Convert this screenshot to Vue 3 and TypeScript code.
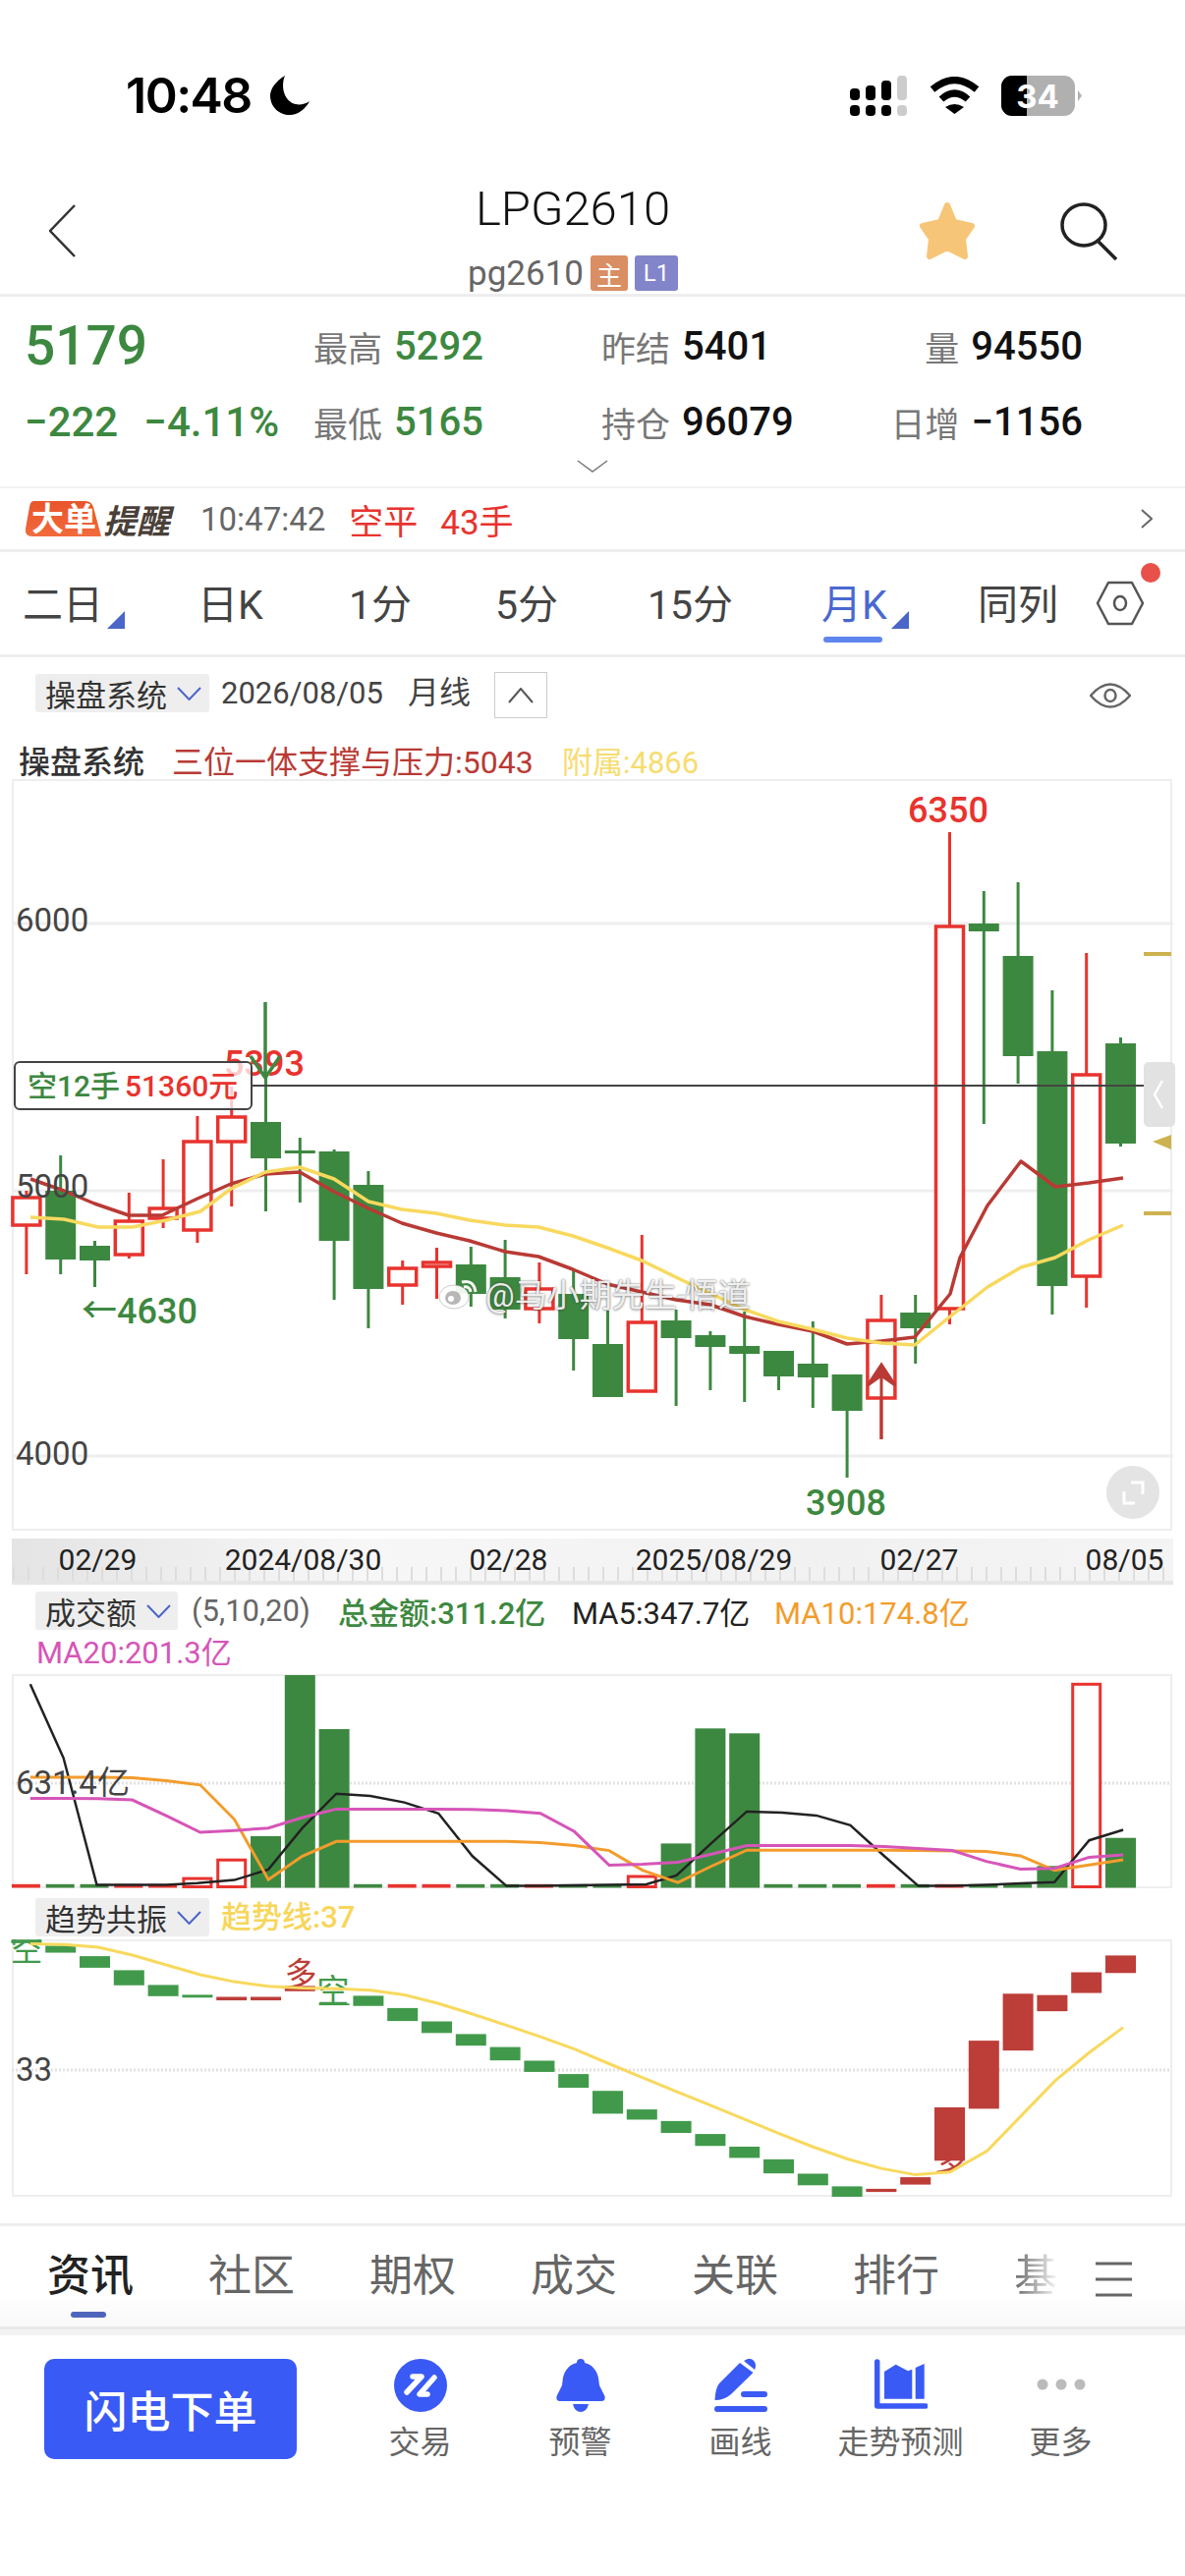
<script setup lang="ts">
type Row = [string, number, number, number, number]
const raw: Row[] = [
  ['r', 1212, 1219, 1247, 1297], ['g', 1176, 1212, 1282, 1297], ['g', 1263, 1268, 1283, 1310],
  ['r', 1214, 1243, 1277, 1281], ['r', 1180, 1230, 1240, 1250], ['r', 1136, 1162, 1252, 1265],
  ['r', 1106, 1137, 1162, 1228], ['g', 1097, 1142, 1179, 1233], ['g', 1158, 1171, 1174, 1224],
  ['g', 1170, 1172, 1263, 1323], ['g', 1192, 1206, 1312, 1352], ['r', 1283, 1291, 1308, 1328],
  ['r', 1270, 1285, 1289, 1322], ['g', 1269, 1287, 1317, 1330], ['g', 1262, 1300, 1333, 1342],
  ['r', 1285, 1312, 1332, 1347], ['g', 1292, 1317, 1363, 1395], ['g', 1334, 1368, 1422, 1422],
  ['r', 1257, 1346, 1416, 1416], ['g', 1333, 1344, 1362, 1431], ['g', 1355, 1359, 1371, 1415],
  ['g', 1335, 1370, 1378, 1427], ['g', 1375, 1375, 1401, 1415], ['g', 1345, 1388, 1402, 1433],
  ['g', 1399, 1399, 1436, 1504], ['r', 1318, 1344, 1423, 1465], ['g', 1318, 1336, 1352, 1388],
  ['r', 847, 943, 1332, 1348], ['g', 907, 940, 948, 1144], ['g', 898, 973, 1075, 1103],
  ['g', 1008, 1070, 1309, 1338], ['r', 970, 1094, 1299, 1331], ['g', 1056, 1062, 1164, 1167]
]
const cx = (i: number): number => 26.9 + 34.8 * i
const candles = raw.map((r, i) => ({ red: r[0] === 'r', x: cx(i), high: r[1], top: r[2], bottom: r[3], low: r[4] }))

const pts = (a: number[][]): string => a.map(p => p.join(',')).join(' ')
const maRed = pts([[31,1200],[65,1212],[96,1225],[131,1237],[165,1237],[201,1220],[235,1205],[270,1195],[305,1193],[340,1213],[375,1230],[409,1245],[444,1255],[478,1263],[514,1274],[548,1279],[583,1292],[618,1307],[653,1315],[688,1323],[723,1328],[758,1340],[792,1348],[827,1355],[862,1368],[897,1365],[931,1361],[967,1317],[977,1280],[1005,1227],[1039,1182],[1074,1208],[1108,1204],[1143,1199]])
const maYellow = pts([[31,1239],[65,1241],[100,1249],[135,1249],[169,1242],[204,1233],[235,1210],[270,1193],[305,1188],[340,1200],[375,1223],[409,1231],[444,1235],[478,1242],[514,1247],[548,1249],[583,1258],[618,1270],[653,1283],[692,1302],[758,1333],[792,1345],[827,1353],[862,1362],[897,1367],[931,1369],[967,1340],[1005,1310],[1039,1290],[1074,1280],[1108,1262],[1143,1247]])

const py = (y: number): number => +(1700 + y / 2.8).toFixed(1)
const vp = (a: number[][]): string => pts(a.map(p => [+(p[0] / 1.3).toFixed(1), py(p[1])]))
const volBlack = vp([[40,40],[84,250],[128,612],[175,612],[220,612],[261,607],[310,598],[355,568],[400,450],[445,352],[490,358],[535,377],[580,408],[625,530],[670,615],[715,615],[760,613],[804,612],[855,610],[895,585],[940,495],[988,403],[1035,406],[1080,414],[1125,442],[1170,530],[1215,615],[1260,615],[1305,612],[1350,608],[1395,604],[1441,485],[1486,455]])
const volOrange = vp([[40,305],[84,305],[130,305],[175,307],[220,315],[265,327],[310,425],[355,597],[400,530],[445,488],[490,488],[535,488],[580,488],[625,488],[670,488],[715,491],[760,500],[806,514],[850,570],[897,605],[940,560],[988,513],[1035,513],[1080,513],[1125,513],[1170,513],[1215,514],[1260,515],[1305,517],[1350,529],[1395,570],[1441,555],[1486,540]])
const volPink = vp([[40,365],[84,365],[130,366],[175,370],[220,415],[265,462],[310,457],[355,450],[400,420],[445,396],[490,396],[535,396],[580,396],[625,397],[670,400],[715,408],[760,460],[806,556],[850,553],[897,547],[940,525],[988,500],[1035,500],[1080,500],[1125,500],[1170,503],[1215,508],[1260,514],[1305,545],[1350,567],[1395,565],[1441,533],[1486,526]])
const trendLine = vp([[40,780],[85,782],[130,790],[175,812],[220,840],[265,868],[310,888],[355,901],[400,906],[445,908],[490,912],[535,925],[580,950],[625,980],[670,1012],[715,1045],[760,1080],[804,1120],[849,1160],[894,1200],[940,1240],[985,1280],[1030,1320],[1075,1358],[1121,1393],[1166,1420],[1211,1438],[1257,1430],[1306,1370],[1351,1270],[1396,1170],[1441,1090],[1486,1018]])

const volTops: (number | null)[] = [null,null,null,null,null,594,541,473,14,168,null,null,null,null,null,null,null,null,588,494,166,180,null,null,null,null,null,null,null,null,558,40,478]
const volReds = new Set([0,3,4,5,6,11,12,15,18,25,27,31])
const vols = volTops.map((t, i) => ({
  x: cx(i), red: volReds.has(i), dash: t === null, top: t === null ? 1917.800 : py(t)
}))

const trendRaw: [string, number, number][] = [
  ['g',768,778],['g',785,805],['g',815,848],['g',855,898],['g',897,929],['g',925,933],['r',931,941],['r',931,941],['r',900,915],['g',950,955],
  ['g',928,957],['g',963,1000],['g',1001,1034],['g',1037,1070],['g',1074,1112],['g',1113,1145],['g',1151,1190],['g',1199,1264],['g',1252,1281],['g',1285,1319],
  ['g',1322,1356],['g',1358,1390],['g',1394,1434],['g',1435,1468],['g',1471,1502],['r',1478,1487],['r',1445,1466],['r',1246,1398],['r',1056,1250],['r',922,1084],
  ['r',926,972],['r',861,920],['r',813,863]
]
const trends = trendRaw.map((r, i) => ({ x: cx(i), red: r[0] === 'r', y: py(r[1]), h: (r[2] - r[1]) / 2.8 }))

const periodTabs = [
  { t: '二日', tri: true }, { t: '日K' }, { t: '1分' }, { t: '5分' }, { t: '15分' },
  { t: '月K', tri: true, on: true }, { t: '同列' }
]
const axisDates = ['02/29', '2024/08/30', '02/28', '2025/08/29', '02/27', '08/05']
const infoTabs = ['资讯', '社区', '期权', '成交', '关联', '排行']
</script>

<template>
  <div class="page">
    <header class="status">
      <span class="time">10:48</span>
      <svg class="moon" width="40" height="40" viewBox="0 0 40 40"><path d="M15 0C5 6 0 14 0 20c0 12 9 20 20 20 8 0 16-6 20-14-4 3-10 4-14 3C15 27 10 12 15 0Z" /></svg>
      <svg class="signal" width="58" height="41" viewBox="0 0 58 41">
        <rect x="0" y="13" width="10" height="12" rx="4" /><rect x="16" y="10" width="10" height="15" rx="4" /><rect x="32" y="5" width="10" height="20" rx="4" /><rect class="dim" x="48" y="0" width="10" height="25" rx="4" />
        <rect x="0" y="30" width="10" height="11" rx="4" /><rect x="16" y="30" width="10" height="11" rx="4" /><rect x="32" y="30" width="10" height="11" rx="4" /><rect class="dim" x="48" y="30" width="10" height="11" rx="4" />
      </svg>
      <svg class="wifi" width="51" height="38" viewBox="0 0 51 38">
        <path d="M3 13Q25.500-6 48 13" fill="none" stroke="#000" stroke-width="7" />
        <path d="M12 23Q25.500 11 39 23" fill="none" stroke="#000" stroke-width="7" />
        <path d="M25.500 38L16 31Q25.500 25 35 31Z" />
      </svg>
      <svg class="battery" width="82" height="41" viewBox="0 0 82 41">
        <rect x="0" y="0" width="75" height="41" rx="11" fill="#b0b0b0" />
        <path d="M11 0H26V41H11A11 11 0 0 1 0 30V11A11 11 0 0 1 11 0Z" fill="#000" />
        <path d="M78 15L82 20.500L78 26Z" fill="#b0b0b0" />
        <text x="37" y="33" class="batt-text" text-anchor="middle">34</text>
      </svg>
    </header>

    <nav class="nav">
      <svg class="back" width="27" height="54" viewBox="0 0 27 54"><path d="M26 1L1 27L26 53" fill="none" stroke="#333" stroke-width="2.500" /></svg>
      <div class="nav-center">
        <div class="title">LPG2610</div>
        <div class="sub"><span class="code">pg2610</span><span class="badge b-main">主</span><span class="badge b-l1">L1</span></div>
      </div>
      <svg class="star" width="58" height="60" viewBox="0 0 58 60"><polygon points="29,4 36,21 54,25 45,38 47,56 29,47 11,56 13,38 4,25 22,21" fill="#f6c577" stroke="#f6c577" stroke-width="6" stroke-linejoin="round" /></svg>
      <svg class="search" width="60" height="60" viewBox="0 0 60 60"><ellipse cx="24" cy="23" rx="22" ry="21" fill="none" stroke="#222" stroke-width="3.500" /><path d="M39 40L57 58" stroke="#222" stroke-width="3.500" /></svg>
    </nav>

    <section class="quote">
      <div class="last">5179</div>
      <div class="cell"><span class="lab">最高</span><span class="val green">5292</span></div>
      <div class="cell"><span class="lab">昨结</span><span class="val">5401</span></div>
      <div class="cell end"><span class="lab">量</span><span class="val">94550</span></div>
      <div class="chg green"><span>−222</span><span>−4.11%</span></div>
      <div class="cell"><span class="lab">最低</span><span class="val green">5165</span></div>
      <div class="cell"><span class="lab">持仓</span><span class="val">96079</span></div>
      <div class="cell end"><span class="lab">日增</span><span class="val">−1156</span></div>
      <svg class="more" width="32" height="13" viewBox="0 0 32 13"><path d="M1 1L16 12L31 1" fill="none" stroke="#777" stroke-width="1.500" /></svg>
    </section>

    <section class="alert">
      <svg class="big" width="78" height="36" viewBox="0 0 78 36">
        <defs><linearGradient id="bigG" x1="0" y1="0" x2="0" y2="1"><stop offset="0" stop-color="#e8552a" /><stop offset="1" stop-color="#f26a3c" /></linearGradient></defs>
        <path d="M9 0H62Q68 0 70 6L78 36H8Q0 36 1 28L5 6Q6 0 9 0Z" fill="url(#bigG)" />
        <text x="7" y="30" class="big-text">大单</text>
      </svg>
      <span class="remind">提醒</span>
      <span class="a-time">10:47:42</span>
      <span class="a-red a-first">空平</span>
      <span class="a-red a-second">43手</span>
      <svg class="a-go" width="12" height="20" viewBox="0 0 12 20"><path d="M1 1L11 10L1 19" fill="none" stroke="#666" stroke-width="2" /></svg>
    </section>

    <section class="periods">
      <div v-for="p in periodTabs" :key="p.t" class="period" :class="{ on: p.on }">
        <span>{{ p.t }}</span>
        <svg v-if="p.tri" class="tri" width="18" height="18" viewBox="0 0 18 18"><path d="M18 0V18H0Z" fill="#4a66c8" /></svg>
        <i v-if="p.on" class="period-bar"></i>
      </div>
      <div class="hex">
        <svg width="50" height="46" viewBox="0 0 50 46"><path d="M13 2H37L48 23L37 44H13L2 23Z" fill="none" stroke="#555" stroke-width="2.500" stroke-linejoin="round" /><ellipse cx="25" cy="23" rx="6" ry="7" fill="none" stroke="#555" stroke-width="2.500" /></svg>
        <i class="red-dot"></i>
      </div>
    </section>

    <section class="toolbar">
      <div class="drop w177"><span>操盘系统</span><svg width="25" height="14" viewBox="0 0 25 14"><path d="M1 1L12.500 13L24 1" fill="none" stroke="#4a66c8" stroke-width="2" /></svg></div>
      <span class="tool-date">2026/08/05</span>
      <span class="tool-line">月线</span>
      <div class="collapse"><svg width="26" height="16" viewBox="0 0 26 16"><path d="M1 15L13 1L25 15" fill="none" stroke="#555" stroke-width="2" /></svg></div>
      <svg class="eye" width="42" height="30" viewBox="0 0 42 30"><path d="M1 15Q21-8 41 15Q21 38 1 15Z" fill="none" stroke="#666" stroke-width="2.500" /><ellipse cx="21" cy="15" rx="5.500" ry="6" fill="none" stroke="#666" stroke-width="2.500" /></svg>
    </section>

    <section class="legend">
      <span class="leg-name">操盘系统</span>
      <span class="leg-red">三位一体支撑与压力:5043</span>
      <span class="leg-yellow">附属:4866</span>
    </section>

    <div class="chart-wrap">
      <svg class="chart" width="1206" height="765" viewBox="0 793 1206 765">
        <rect x="13" y="794" width="1179" height="763" fill="none" stroke="#eee" stroke-width="2" />
        <g stroke="#eee" stroke-width="3">
          <line x1="12" y1="940" x2="1194" y2="940" /><line x1="12" y1="1212" x2="1194" y2="1212" /><line x1="12" y1="1482" x2="1194" y2="1482" />
        </g>
        <g v-for="(c, i) in candles" :key="i">
          <line :x1="c.x" :y1="c.high" :x2="c.x" :y2="c.low" :stroke="c.red ? '#e8332e' : '#3d8840'" stroke-width="3" />
          <rect v-if="c.red" :x="c.x - 14" :y="c.top" width="28" :height="c.bottom - c.top" fill="#fff" stroke="#e8332e" stroke-width="3.500" />
          <rect v-else :x="c.x - 15.500" :y="c.top" width="31" :height="c.bottom - c.top" fill="#3d8840" />
        </g>
        <polyline :points="maRed" fill="none" stroke="#b93a35" stroke-width="3.500" stroke-linejoin="round" />
        <polyline :points="maYellow" fill="none" stroke="#f8d95e" stroke-width="3.500" stroke-linejoin="round" />
        <text x="16" y="948" class="ax">6000</text>
        <text x="16" y="1219" class="ax">5000</text>
        <text x="16" y="1491" class="ax">4000</text>
        <text x="965" y="837" class="hi red-t" text-anchor="middle">6350</text>
        <text x="269" y="1095" class="hi red-t" text-anchor="middle">5393</text>
        <text x="861" y="1542" class="hi green-t" text-anchor="middle">3908</text>
        <text x="83" y="1347" class="hi green-t">←4630</text>
        <line x1="256" y1="1105" x2="1194" y2="1105" stroke="#444" stroke-width="2" />
        <rect x="15" y="1081" width="241" height="48" rx="5" fill="#fff" fill-opacity=".75" stroke="#444" stroke-width="2" />
        <text x="28" y="1116" class="pos green-t">空12手</text>
        <text x="127" y="1116" class="pos red-t">51360元</text>
        <path d="M270 1020V1097M255 1075L270 1097L285 1075" fill="none" stroke="#3d8840" stroke-width="3.500" />
        <path d="M897 1465V1400M897 1389L883 1410L897 1400L911 1410Z" fill="#b93a35" stroke="#b93a35" stroke-width="3" />
        <rect x="1164" y="969" width="28" height="4" fill="#cdb24f" />
        <rect x="1164" y="1233" width="28" height="4" fill="#cdb24f" />
        <path d="M1173 1162L1192 1155V1170Z" fill="#cdb24f" />
        <rect x="1164" y="1081" width="32" height="66" rx="5" fill="#e2e2e2" />
        <path d="M1183 1100L1175 1114L1183 1128" fill="none" stroke="#fff" stroke-width="2.500" />
        <ellipse cx="1153" cy="1519" rx="27" ry="27" fill="#e4e4e4" />
        <path d="M1151 1509H1163V1521M1144 1518V1530H1155" fill="none" stroke="#fff" stroke-width="3" />
      </svg>
      <div class="mark">
        <svg width="42" height="34" viewBox="0 0 42 34">
          <ellipse cx="16" cy="21" rx="15" ry="12" fill="#fff" fill-opacity=".92" stroke="#999" stroke-opacity=".5" />
          <ellipse cx="15" cy="22" rx="8" ry="7" fill="#aaa" fill-opacity=".85" />
          <circle cx="13" cy="23" r="3" fill="#fff" />
          <path d="M24 6Q36 3 38 16M26 11Q32 10 33 16" fill="none" stroke="#fff" stroke-opacity=".95" stroke-width="3" />
        </svg>
        <span>@马小期先生-悟道</span>
      </div>
    </div>

    <div class="axis">
      <div class="axis-labels"><span v-for="d in axisDates" :key="d">{{ d }}</span></div>
    </div>

    <section class="vol-head">
      <div class="vol-row">
        <div class="drop w145"><span>成交额</span><svg width="25" height="14" viewBox="0 0 25 14"><path d="M1 1L12.500 13L24 1" fill="none" stroke="#4a66c8" stroke-width="2" /></svg></div>
        <span class="v-param">(5,10,20)</span>
        <span class="v-green">总金额:311.2亿</span>
        <span class="v-dark">MA5:347.7亿</span>
        <span class="v-orange">MA10:174.8亿</span>
      </div>
      <div class="v-pink">MA20:201.3亿</div>
    </section>

    <svg class="chart" width="1206" height="218" viewBox="0 1704 1206 218">
      <rect x="13" y="1705" width="1179" height="216" fill="none" stroke="#eee" stroke-width="2" />
      <line x1="12" y1="1815" x2="1192" y2="1815" stroke="#e2e2e2" stroke-width="3" stroke-dasharray="2 2" />
      <template v-for="(v, i) in vols" :key="i">
        <rect v-if="v.dash" :x="v.x - 15" y="1917.800" width="29" height="3.700" :fill="v.red ? '#e8332e' : '#3d8840'" />
        <rect v-else-if="v.red" :x="v.x - 14" :y="v.top" width="28" :height="1920.500 - v.top" fill="#fff" stroke="#e8332e" stroke-width="3" />
        <rect v-else :x="v.x - 15.500" :y="v.top" width="31" :height="1921.500 - v.top" fill="#3d8840" />
      </template>
      <polyline :points="volBlack" fill="none" stroke="#222" stroke-width="2.500" />
      <polyline :points="volOrange" fill="none" stroke="#f39c2d" stroke-width="3" />
      <polyline :points="volPink" fill="none" stroke="#d655b8" stroke-width="3" />
      <text x="16" y="1826" class="ax">631.4亿</text>
    </svg>

    <section class="trend-head">
      <div class="drop w177"><span>趋势共振</span><svg width="25" height="14" viewBox="0 0 25 14"><path d="M1 1L12.500 13L24 1" fill="none" stroke="#4a66c8" stroke-width="2" /></svg></div>
      <span class="t-yellow">趋势线:37</span>
    </section>

    <svg class="chart" width="1206" height="262" viewBox="0 1974 1206 262">
      <rect x="13" y="1975" width="1179" height="260" fill="none" stroke="#eee" stroke-width="2" />
      <line x1="12" y1="2107" x2="1192" y2="2107" stroke="#e2e2e2" stroke-width="3" stroke-dasharray="2 2" />
      <text x="967" y="2209" class="sig red-d" text-anchor="middle">多</text>
      <rect v-for="(t, i) in trends" :key="i" :x="t.x - 15.500" :y="t.y" width="31" :height="t.h" :fill="t.red ? '#bd3d38' : '#419a4b'" />
      <text x="27" y="1996" class="sig green-l" text-anchor="middle">空</text>
      <text x="306" y="2021" class="sig red-d" text-anchor="middle">多</text>
      <text x="339" y="2038" class="sig green-l" text-anchor="middle">空</text>
      <polyline :points="trendLine" fill="none" stroke="#f8d95e" stroke-width="3" />
      <text x="16" y="2118" class="ax">33</text>
    </svg>

    <div class="gap"></div>

    <section class="info">
      <div class="info-tabs">
        <div v-for="(t, i) in infoTabs" :key="t" class="info-tab" :class="{ on: i === 0 }">{{ t }}<i v-if="i === 0" class="info-bar"></i></div>
        <div class="info-tab fade">基</div>
      </div>
      <svg class="menu" width="37" height="36" viewBox="0 0 37 36"><path d="M0 2H37M0 18H37M0 34H37" stroke="#666" stroke-width="3" /></svg>
    </section>

    <footer class="bottom">
      <button class="flash">闪电下单</button>
      <div class="act">
        <svg width="54" height="54" viewBox="0 0 54 54"><circle cx="27" cy="27" r="27" fill="#3a5af5" /><path d="M13 34L28 18H19M41 19L26 36H34" fill="none" stroke="#fff" stroke-width="5.500" stroke-linecap="round" stroke-linejoin="round" /></svg>
        <span>交易</span>
      </div>
      <div class="act">
        <svg width="54" height="54" viewBox="0 0 54 54"><path d="M27 0a4 4 0 0 1 4 4C40 6 45 14 45.500 23L46 27L51.500 38Q52.500 43 48 43H6Q1.500 43 2.500 38L8 27L8.500 23C9 14 14 6 23 4a4 4 0 0 1 4-4Z" fill="#3a5af5" /><path d="M19 46H35Q33 54 27 54Q21 54 19 46Z" fill="#3a5af5" /></svg>
        <span>预警</span>
      </div>
      <div class="act">
        <svg width="54" height="54" viewBox="0 0 54 54"><path d="M.5 42Q1 30 5 25L26 4L39.500 14L17 36Q10 42 .5 42Z" fill="#3a5af5" /><path d="M30 2L34 0Q38-1 41 3Q43 7 41 11Z" fill="#3a5af5" /><rect x="27" y="33" width="27" height="6" rx="3" fill="#3a5af5" /><rect x="0" y="48" width="54" height="6" rx="3" fill="#3a5af5" /></svg>
        <span>画线</span>
      </div>
      <div class="act">
        <svg width="54" height="54" viewBox="0 0 54 54"><path d="M2.700 3V48H52" fill="none" stroke="#3a5af5" stroke-width="5.500" stroke-linecap="round" stroke-linejoin="round" /><path d="M10 13L21.700 5.700L34 12.300L38.300 10.700V40.700H10Z" fill="#3a5af5" /><path d="M41.700 9L50.700 5V40.700H41.700Z" fill="#3a5af5" /></svg>
        <span>走势预测</span>
      </div>
      <div class="act">
        <svg width="54" height="54" viewBox="0 0 54 54"><circle cx="8" cy="26" r="5.500" fill="#bbb" /><circle cx="27" cy="26" r="5.500" fill="#bbb" /><circle cx="46" cy="26" r="5.500" fill="#bbb" /></svg>
        <span>更多</span>
      </div>
    </footer>
  </div>
</template>

<style>
html, body { margin: 0; background: #fff; }
</style>

<style scoped>
.page { width: 1206px; height: 2622px; overflow: hidden; background: #fff; font-family: Roboto, "Noto Sans CJK SC", sans-serif; color: #222; }
.green { color: #3d8840; }
.status { height: 140px; box-sizing: border-box; padding: 77px 0 0 128px; display: flex; align-items: flex-start; }
.time { font: 600 50px/41px Inter, sans-serif; letter-spacing: -1.500px; color: #000; width: 147px; }
.signal { margin-left: 550px; }
.signal .dim { fill: #ccc; }
.wifi { margin: 1px 0 0 23px; }
.battery { margin-left: 22px; }
.batt-text { font: 700 33px Inter, sans-serif; fill: #fff; }
.nav { height: 162px; box-sizing: border-box; border-bottom: 3px solid #eee; display: flex; padding-left: 50px; position: relative; align-items: flex-start; }
.back { margin-top: 68px; }
.nav-center { width: 360px; margin-left: 326px; margin-top: 45px; display: flex; flex-direction: column; align-items: center; }
.title { font-size: 49px; line-height: 56px; font-weight: 300; color: #111; }
.sub { margin-top: 18px; display: flex; align-items: center; height: 38px; }
.code { font-size: 35px; color: #666; margin-right: 7px; }
.badge { height: 36px; border-radius: 3px; color: #fff; display: flex; align-items: center; justify-content: center; font-size: 26px; }
.b-main { width: 38px; background: #d98e63; }
.b-l1 { width: 44px; margin-left: 7px; background: #8285c9; font-size: 24px; }
.star { margin: 65px 0 0 172px; }
.search { margin: 66px 0 0 86px; }
.quote { height: 195px; box-sizing: border-box; border-bottom: 2px solid #f2f2f2; padding: 12px 0 0 25px; display: grid; grid-template-columns: 294px 293px 293px 197px; grid-auto-rows: 77px; position: relative; }
.last { font-size: 55px; font-weight: 500; color: #3d8840; line-height: 77px; }
.cell { display: flex; align-items: center; gap: 12px; }
.cell.end { justify-content: flex-end; }
.lab { font-size: 35px; color: #777; }
.val { font-size: 40px; font-weight: 500; color: #111; }
.val.green { color: #3d8840; }
.chg { display: flex; gap: 26px; font-size: 42px; font-weight: 500; align-items: center; }
.more { position: absolute; left: 587px; top: 166px; }
.alert { height: 65px; box-sizing: border-box; border-bottom: 3px solid #eee; display: flex; align-items: center; padding-left: 25px; }
.big { overflow: visible; }
.big-text { font-size: 33px; font-weight: 700; fill: #fff; }
.remind { font-size: 34px; font-weight: 700; font-style: italic; color: #4a4038; margin-left: 2px; }
.a-time { font-size: 33px; color: #666; margin-left: 31px; }
.a-red { font-size: 35px; color: #e8332e; }
.a-first { margin-left: 24px; }
.a-second { margin-left: 23px; }
.a-go { margin-left: auto; margin-right: 33px; }
.periods { height: 107px; box-sizing: border-box; border-bottom: 3px solid #eee; padding-left: 23px; display: grid; grid-template-columns: 178px 154px 149px 155px 177px 159px 120px 60px; position: relative; align-items: start; }
.period { display: flex; align-items: flex-start; position: relative; font-size: 41px; line-height: 52px; margin-top: 28px; color: #444; white-space: nowrap; }
.period.on { color: #4a68d0; }
.tri { margin: 32px 0 0 4px; }
.period-bar { position: absolute; left: 2px; top: 58px; width: 60px; height: 6px; border-radius: 3px; background: #5f86ee; }
.hex { position: relative; margin-top: 29px; }
.red-dot { position: absolute; left: 46px; top: -18px; width: 20px; height: 20px; border-radius: 50%; background: #e8504a; }
.toolbar { height: 76px; padding-left: 36px; display: flex; align-items: flex-start; padding-top: 17px; box-sizing: border-box; position: relative; }
.drop { height: 39px; background: #eee; border-radius: 3px; display: flex; align-items: center; font-size: 31px; color: #333; box-sizing: border-box; padding-left: 10px; gap: 10px; flex: none; }
.w177 { width: 177px; }
.w145 { width: 145px; }
.tool-date { font-size: 31px; line-height: 39px; color: #444; margin-left: 12px; }
.tool-line { font-size: 32px; line-height: 39px; color: #444; margin-left: 25px; }
.collapse { width: 54px; height: 47px; border: 1.500px solid #ccc; box-sizing: border-box; display: flex; align-items: center; justify-content: center; margin: -2px 0 0 24px; }
.eye { margin: 7px 0 0 552px; }
.legend { height: 48px; display: flex; align-items: center; padding: 8px 0 0 19px; box-sizing: border-box; font-size: 32px; }
.leg-name { font-size: 32px; font-weight: 500; color: #333; width: 156px; }
.leg-red { color: #b93a35; width: 397px; }
.leg-yellow { color: #f7dc6f; font-size: 31px; }
.chart-wrap { position: relative; height: 765px; }
.chart { display: block; }
.ax { font-size: 33px; fill: #444; }
.hi { font-size: 36px; font-weight: 500; }
.red-t { fill: #e8332e; }
.green-t { fill: #3d8840; }
.pos { font-size: 30px; font-weight: 500; }
.mark { position: absolute; left: 446px; top: 499px; display: flex; align-items: center; gap: 6px; font-size: 33px; color: rgba(255, 255, 255, .9); text-shadow: 0 0 2px rgba(60, 60, 60, .7), 0 1px 3px rgba(60, 60, 60, .4); }
.axis { margin: 8px 12px 0; height: 47px; overflow: hidden; box-sizing: border-box; border-bottom: 4px solid #e6e6e6; background: repeating-linear-gradient(90deg, transparent 0 1px, #ddd 1px 3px, transparent 3px 15px) 0 29px / 100% 18px no-repeat, linear-gradient(90deg, #e4e4e4, #f7f7f7 30%, #f1f1f1 70%, #f4f4f4); }
.axis-labels { display: grid; grid-template-columns: repeat(6, 209px); margin-left: -17px; font-size: 30px; line-height: 30px; color: #222; text-align: center; padding-top: 7px; }
.vol-head { height: 91px; box-sizing: border-box; padding-top: 4px; font-size: 31px; }
.vol-row { display: grid; grid-template-columns: 159px 149px 238px 206px auto; padding-left: 36px; align-items: center; height: 39px; }
.v-param { color: #666; }
.v-green { color: #3d8840; font-weight: 500; }
.v-dark { color: #222; }
.v-orange { color: #f39c2d; }
.v-pink { color: #d655b8; padding: 9px 0 0 37px; line-height: 36px; }
.trend-head { height: 52px; box-sizing: border-box; padding: 10px 0 0 36px; display: flex; }
.t-yellow { font-size: 31px; line-height: 39px; color: #f7d65a; margin-left: 12px; font-weight: 500; }
.sig { font-size: 33px; }
.red-d { fill: #bd3d38; }
.green-l { fill: #419a4b; }
.gap { height: 27px; }
.info { height: 114px; box-sizing: border-box; border-top: 3px solid #eee; display: flex; background: linear-gradient(180deg, #fff 0 68px, #f8f8f8 105px); position: relative; box-shadow: inset 0 -6px 0 #f3f3f3, inset 0 -9px 0 #e8e8e8; }
.info-tabs { display: grid; grid-template-columns: repeat(6, 164px) 54px; padding: 25px 0 0 48px; }
.info-tab { font-size: 44px; line-height: 52px; color: #666; position: relative; white-space: nowrap; }
.info-tab.on { color: #222; font-weight: 500; }
.info-tab.fade { background: linear-gradient(90deg, #777 10%, rgba(119, 119, 119, .15) 75%); -webkit-background-clip: text; background-clip: text; color: transparent; }
.info-bar { position: absolute; left: 24px; top: 62px; width: 36px; height: 6px; border-radius: 3px; background: #4f65bc; }
.menu { margin: 36px 0 0 29px; }
.bottom { display: flex; padding: 24px 0 0 45px; align-items: flex-start; }
.flash { width: 257px; height: 102px; border: 0; border-radius: 10px; background: #3a5af5; color: #fff; font: 500 44px Roboto, "Noto Sans CJK SC", sans-serif; flex: none; margin-right: 44px; padding: 0; }
.act { width: 163px; display: flex; flex-direction: column; align-items: center; flex: none; font-size: 32px; line-height: 34px; color: #666; gap: 14px; }
</style>
